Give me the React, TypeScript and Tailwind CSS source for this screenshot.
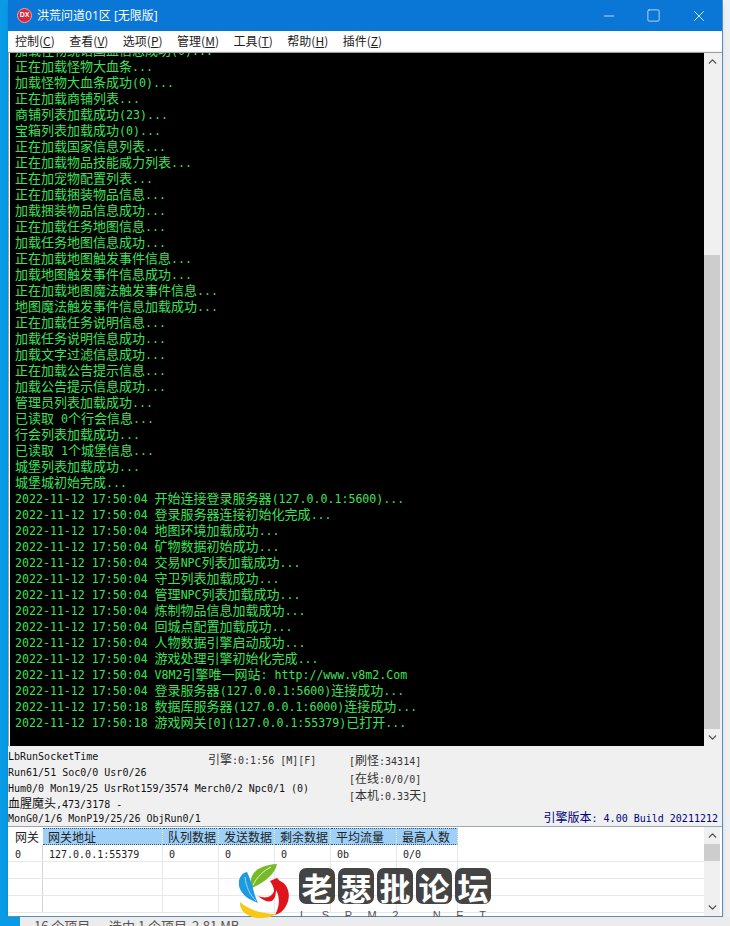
import { Fragment } from 'react';
import { ChevronDown, ChevronUp, Minus, Square, X } from 'lucide-react';

const bootLines = [
  '加载怪物统诺国血信息成功(0)...',
  '正在加载怪物大血条...',
  '加载怪物大血条成功(0)...',
  '正在加载商铺列表...',
  '商铺列表加载成功(23)...',
  '宝箱列表加载成功(0)...',
  '正在加载国家信息列表...',
  '正在加载物品技能威力列表...',
  '正在加宠物配置列表...',
  '正在加载捆装物品信息...',
  '加载捆装物品信息成功...',
  '正在加载任务地图信息...',
  '加载任务地图信息成功...',
  '正在加载地图触发事件信息...',
  '加载地图触发事件信息成功...',
  '正在加载地图魔法触发事件信息...',
  '地图魔法触发事件信息加载成功...',
  '正在加载任务说明信息...',
  '加载任务说明信息成功...',
  '加载文字过滤信息成功...',
  '正在加载公告提示信息...',
  '加载公告提示信息成功...',
  '管理员列表加载成功...',
  '已读取 0个行会信息...',
  '行会列表加载成功...',
  '已读取 1个城堡信息...',
  '城堡列表加载成功...',
  '城堡城初始完成...',
  '2022-11-12 17:50:04 开始连接登录服务器(127.0.0.1:5600)...',
  '2022-11-12 17:50:04 登录服务器连接初始化完成...',
  '2022-11-12 17:50:04 地图环境加载成功...',
  '2022-11-12 17:50:04 矿物数据初始成功...',
  '2022-11-12 17:50:04 交易NPC列表加载成功...',
  '2022-11-12 17:50:04 守卫列表加载成功...',
  '2022-11-12 17:50:04 管理NPC列表加载成功...',
  '2022-11-12 17:50:04 炼制物品信息加载成功...',
  '2022-11-12 17:50:04 回城点配置加载成功...',
  '2022-11-12 17:50:04 人物数据引擎启动成功...',
  '2022-11-12 17:50:04 游戏处理引擎初始化完成...',
  '2022-11-12 17:50:04 V8M2引擎唯一网站: http://www.v8m2.Com',
  '2022-11-12 17:50:04 登录服务器(127.0.0.1:5600)连接成功...',
  '2022-11-12 17:50:18 数据库服务器(127.0.0.1:6000)连接成功...',
  '2022-11-12 17:50:18 游戏网关[0](127.0.0.1:55379)已打开...',
];

const menus = [
  ['控制', 'C'],
  ['查看', 'V'],
  ['选项', 'P'],
  ['管理', 'M'],
  ['工具', 'T'],
  ['帮助', 'H'],
  ['插件', 'Z'],
];

const columns = [
  { title: '网关地址', width: 'w-[120px]', value: '127.0.0.1:55379' },
  { title: '队列数据', width: 'w-[56px]', value: '0' },
  { title: '发送数据', width: 'w-[56px]', value: '0' },
  { title: '剩余数据', width: 'w-[56px]', value: '0' },
  { title: '平均流量', width: 'w-[66px]', value: '0b' },
  { title: '最高人数', width: 'w-[61px]', value: '0/0' },
];

const logoChars = ['老', '瑟', '批', '论', '坛'];
const logoSub = ['L', 'S', 'P', 'M', '2', '.', 'N', 'E', 'T'];

const monoSm = "text-[10px] font-['DejaVu_Sans_Mono',monospace]";

// ASCII runs are narrower than half the CJK size in the source bitmap font, so they get their own size
const Mixed = ({ text, ascii }: { text: string; ascii: string }) => (
  <>
    {text.split(/([\x00-\x7f]+)/).map((part, idx) =>
      part === '' ? null : /^[\x00-\x7f]/.test(part) ? (
        <span key={idx} className={ascii}>{part}</span>
      ) : (
        <Fragment key={idx}>{part}</Fragment>
      )
    )}
  </>
);

const ScrollTrack = ({ children }: { children: React.ReactNode }) => (
  <div className="w-[16px] shrink-0 bg-[#f0f0f0] flex flex-col items-stretch">
    <div className="h-[17px] flex items-center justify-center text-[#505050]">
      <ChevronUp size={13} strokeWidth={2.6} />
    </div>
    {children}
    <div className="h-[17px] flex items-center justify-center text-[#505050]">
      <ChevronDown size={13} strokeWidth={2.6} />
    </div>
  </div>
);

const Logo = () => (
  <div className="absolute left-[222px] top-[27px] flex items-start">
    <svg width="70" height="71" viewBox="0 0 70 71" className="shrink-0">
      <path d="M22 34C17 21 27 11 47 10C45 20 35 28 22 34Z" fill="#78b928" />
      <path d="M23 31C27 23 33 17 41 13" stroke="#fff" strokeWidth="0.8" fill="none" />
      <path d="M17 18C10 19 7 28 10 35C13 42 20 46 28 49C24 42 23 30 17 18Z" fill="#1e9be0" />
      <path d="M15 23C16 33 20 41 26 47" stroke="#bfe4f7" strokeWidth="0.8" fill="none" />
      <path d="M10 48C9 56 17 64 30 64C36 64 42 63 46 60C34 60 20 57 10 48Z" fill="#f7c815" />
      <path d="M40 27L47 24L50 27C58 30 62 42 56 52C53 58 48 60 45 61C50 52 50 43 46 36C46 46 41 53 28 42C36 45 42 43 44 37C44 33 42 30 40 27Z" fill="#e0141c" />
    </svg>
    <div className="ml-[-1px] mt-[14px] flex flex-col">
      <div className="flex gap-[3px]">
        {logoChars.map((ch) => (
          <div key={ch} className="w-[36px] h-[36px] rounded-[7px] bg-[#444444] flex items-center justify-center text-white text-[31px] leading-none font-bold">
            {ch}
          </div>
        ))}
      </div>
      <div className="mt-[4px] h-[9px] w-[192px] overflow-hidden flex justify-between text-[11px] leading-[14px] text-[#555555] font-['Liberation_Sans',sans-serif] pl-[1px] pr-[5px]">
        {logoSub.map((ch, idx) => (
          <span key={idx}>{ch}</span>
        ))}
      </div>
    </div>
  </div>
);

export default function App() {
  return (
    <div className="w-[730px] h-[926px] overflow-hidden flex flex-col bg-[#eef1f4] font-['Noto_Sans_CJK_SC',sans-serif]">
      <div className="h-[917px] flex shrink-0">
        <div className="w-[8px] bg-[#0a9be6] shrink-0" />

        <div className="w-[715px] shrink-0 flex flex-col border-r border-b border-[#5b8db5] shadow-md">
          {/* title bar */}
          <div className="h-[31px] bg-[#0a76d6] flex items-center shrink-0">
            <div className="ml-[9px] w-[15px] h-[15px] rounded-full bg-[#d8283c] border border-[#f0a0a8] flex items-center justify-center text-white text-[7px] font-bold font-['Liberation_Sans',sans-serif]">
              DX
            </div>
            <span className="ml-[5px] text-white text-[12px]">
              <Mixed text="洪荒问道01区 [无限版]" ascii="text-[12px] font-['Open_Sans',sans-serif]" />
            </span>
            <div className="ml-auto mr-[14px] flex items-center gap-[29px] text-white">
              <Minus size={16} strokeWidth={1.1} />
              <Square size={15} strokeWidth={1.1} />
              <X size={18} strokeWidth={1.1} />
            </div>
          </div>

          {/* menu */}
          <div className="h-[20px] bg-white flex items-center gap-[14.5px] pl-[7px] text-[12px] text-[#222222] shrink-0">
            {menus.map(([label, key]) => (
              <span key={key}>
                {label}(<span className="underline">{key}</span>)
              </span>
            ))}
          </div>

          {/* log */}
          <div className="h-[694px] mt-[1px] flex border-t border-l border-[#a0a0a0] shrink-0 bg-white pl-[1px]">
            <div className="flex-1 bg-black overflow-hidden">
              <div className="mt-[-11px] pl-[5px] text-[13px] leading-[16px] text-[#3fe05a] whitespace-pre">
                {bootLines.map((line, idx) => (
                  <div key={idx} className="h-[16px]">
                    <Mixed text={line} ascii="text-[11.6px] font-['DejaVu_Sans_Mono',monospace]" />
                  </div>
                ))}
              </div>
            </div>
            <ScrollTrack>
              <div className="h-[185px]" />
              <div className="flex-1 bg-[#cdcdcd]" />
            </ScrollTrack>
            <div className="w-[2px] bg-[#f0f0f0]" />
          </div>

          {/* engine stats */}
          <div className="h-[81px] bg-[#f0f0f0] border-b border-[#9aa8b4] shrink-0 flex flex-col pt-[3px] text-[#111111] whitespace-pre">
            <div className="flex flex-1">
              <div className="w-[200px] text-[10px] leading-[16px] font-['DejaVu_Sans_Mono',monospace]">
                <div className="h-[16px]">LbRunSocketTime</div>
                <div className="h-[16px]">Run61/51 Soc0/0 Usr0/26</div>
                <div className="h-[15px]">Hum0/0 Mon19/25 UsrRot159/3574 Merch0/2 Npc0/1 (0)</div>
                <div className="h-[14px] text-[12px] leading-[14px] font-['Noto_Sans_CJK_SC',sans-serif]">
                  <Mixed text="血腥魔头,473/3178 -" ascii={monoSm} />
                </div>
              </div>
              <div className="w-[141px] text-[12px] leading-[18px] pt-[1px] text-[#333333]">
                <Mixed text="引擎:0:1:56 [M][F]" ascii={monoSm} />
              </div>
              <div className="text-[12px] leading-[17.5px] pt-[2px] text-[#333333]">
                <div className="h-[17.5px]"><Mixed text="[刷怪:34314]" ascii={monoSm} /></div>
                <div className="h-[17.5px]"><Mixed text="[在线:0/0/0]" ascii={monoSm} /></div>
                <div className="h-[17.5px]"><Mixed text="[本机:0.33天]" ascii={monoSm} /></div>
              </div>
            </div>
            <div className="flex items-end justify-between pr-[4px] pb-[3px]">
              <span className="text-[10px] leading-[14px] font-['DejaVu_Sans_Mono',monospace]">MonG0/1/6 MonP19/25/26 ObjRun0/1</span>
              <span className="h-[14px] mb-[2px] text-[12px] leading-[14px] text-[#000080]">
                <Mixed text="引擎版本: 4.00 Build 20211212" ascii={monoSm} />
              </span>
            </div>
          </div>

          {/* gate table */}
          <div className="relative flex-1 bg-white flex">
            <div className="flex-1 pt-[1px] text-[12px] text-[#222222] overflow-hidden">
              <div className="h-[17px] flex items-center leading-none">
                <div className="w-[35px] pl-[7px] shrink-0">网关</div>
                {columns.map((col) => (
                  <div key={col.title} className={`${col.width} h-full flex items-center pl-[5px] bg-[#9fd0f8] border-y border-dotted border-[#33557a] border-r-[#e4f1fc] border-r shrink-0`}>
                    {col.title}
                  </div>
                ))}
              </div>
              {[0, 1, 2, 3].map((row) => (
                <div key={row} className="h-[17px] flex border-b border-[#e8e8e8]">
                  <div className="w-[35px] pl-[7px] shrink-0 border-r border-[#d4d4d4] text-[10px] leading-[19px] font-['DejaVu_Sans_Mono',monospace]">
                    {row === 0 ? '0' : ''}
                  </div>
                  {columns.map((col) => (
                    <div key={col.title} className={`${col.width} pl-[6px] shrink-0 border-r border-[#e8e8e8] text-[10px] leading-[19px] font-['DejaVu_Sans_Mono',monospace]`}>
                      {row === 0 ? col.value : ''}
                    </div>
                  ))}
                </div>
              ))}
            </div>
            <ScrollTrack>
              <div className="h-[17px] bg-[#cdcdcd]" />
              <div className="flex-1" />
            </ScrollTrack>
            <div className="w-[2px]" />
            <Logo />
          </div>
        </div>
      </div>

      {/* explorer status bar behind the window */}
      <div className="flex-1 flex">
        <div className="w-[20px] bg-[#0a9be6]" />
        <div className="flex-1 bg-[#ececec] pl-[14px] pt-[1px] flex text-[13px] leading-[16px] text-[#555555] whitespace-pre">
          <span className="w-[75px]">16 个项目</span>
          <span className="w-[83px]">选中 1 个项目</span>
          <span>2.81 MB</span>
        </div>
      </div>
    </div>
  );
}
